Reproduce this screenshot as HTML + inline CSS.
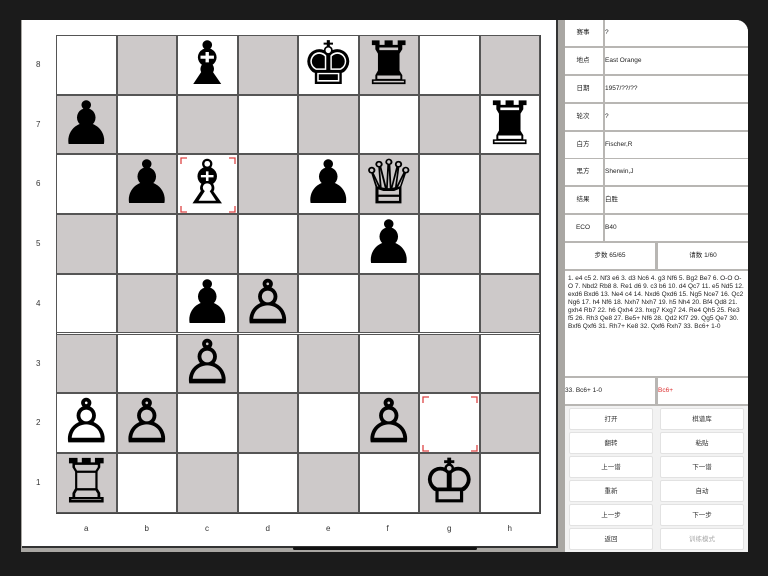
<!DOCTYPE html>
<html><head><meta charset="utf-8"><style>
*{margin:0;padding:0;box-sizing:border-box}
body{width:768px;height:576px;background:#1b1b1b;position:relative;overflow:hidden;font-family:"Liberation Sans","Noto Sans CJK SC",sans-serif}
#screen{position:absolute;left:21px;top:20px;width:727px;height:532px;background:#a9a7a3;border-top-right-radius:12px;overflow:hidden}
#boardbox{position:absolute;left:1px;top:0;width:536px;height:528px;background:#fff;border-right:2px solid #333;border-bottom:2px solid #333}
.sq{position:absolute;width:60.5px;height:59.7px;border:1px solid #555}
.d{background:#cdc9c9}
.pc{position:absolute;width:60.5px;height:59.7px;text-align:center;line-height:58px;font-family:"DejaVu Sans",sans-serif;font-size:60px;color:#000}
.w{-webkit-text-stroke:0.8px #000}
.lbl{position:absolute;font-size:8px;color:#333}
.hl{position:absolute;width:56px;height:56px}
#panel{position:absolute;left:544px;top:0;width:183px;height:532px;background:#b8b6b3}
.row{position:absolute;left:0;width:183px;height:26px;background:#fff;font-size:6.5px;color:#222}
.row .k{position:absolute;left:0;top:0;width:36px;height:26px;line-height:26px;text-align:center}
.row .v{position:absolute;left:38px;top:0;right:0;height:26px;line-height:26px;padding-left:0;background:#fff;border-left:2px solid #b8b6b3}
.btn{position:absolute;width:84px;height:22px;background:#fff;border:1px solid #e2e2e2;border-radius:2px;font-size:6.5px;text-align:center;line-height:22px;color:#333}
</style></head><body>
<div id="screen">
<div id="boardbox">
<div style="position:absolute;left:34px;top:15px;width:485px;height:479px;border:1px solid #444"></div>
</div>
<div id="sqs"></div>
<div id="panel">
<div class="row" style="top:0"><div class="k">赛事</div><div class="v">?</div></div>
<div class="row" style="top:28px"><div class="k">地点</div><div class="v">East Orange</div></div>
<div class="row" style="top:56px"><div class="k">日期</div><div class="v">1957/??/??</div></div>
<div class="row" style="top:84px"><div class="k">轮次</div><div class="v">?</div></div>
<div class="row" style="top:112px"><div class="k">白方</div><div class="v">Fischer,R</div></div>
<div class="row" style="top:139px"><div class="k">黑方</div><div class="v">Sherwin,J</div></div>
<div class="row" style="top:167px"><div class="k">结果</div><div class="v">白胜</div></div>
<div class="row" style="top:195px"><div class="k">ECO</div><div class="v">B40</div></div>
<div class="row" style="top:223px;width:90px;text-align:center;line-height:26px">步数 65/65</div>
<div class="row" style="top:223px;left:93px;width:90px;text-align:center;line-height:26px">请数 1/60</div>
<div style="position:absolute;left:0;top:251px;width:183px;height:105px;background:#fff;font-size:6.5px;line-height:8px;padding:4px 3px;color:#222">1. e4 c5 2. Nf3 e6 3. d3 Nc6 4. g3 Nf6 5. Bg2 Be7 6. O-O O-O 7. Nbd2 Rb8 8. Re1 d6 9. c3 b6 10. d4 Qc7 11. e5 Nd5 12. exd6 Bxd6 13. Ne4 c4 14. Nxd6 Qxd6 15. Ng5 Nce7 16. Qc2 Ng6 17. h4 Nf6 18. Nxh7 Nxh7 19. h5 Nh4 20. Bf4 Qd8 21. gxh4 Rb7 22. h6 Qxh4 23. hxg7 Kxg7 24. Re4 Qh5 25. Re3 f5 26. Rh3 Qe8 27. Be5+ Nf6 28. Qd2 Kf7 29. Qg5 Qe7 30. Bxf6 Qxf6 31. Rh7+ Ke8 32. Qxf6 Rxh7 33. Bc6+ 1-0</div>
<div class="row" style="top:358px;width:90px;line-height:26px">33. Bc6+ 1-0</div>
<div class="row" style="top:358px;left:93px;width:90px;line-height:26px;color:#d33">Bc6+</div>
<div style="position:absolute;left:0;top:386px;width:183px;height:146px;background:#f2f2f2"></div>
<div class="btn" style="left:4px;top:388px">打开</div><div class="btn" style="left:95px;top:388px">棋谱库</div>
<div class="btn" style="left:4px;top:412px">翻转</div><div class="btn" style="left:95px;top:412px">粘贴</div>
<div class="btn" style="left:4px;top:436px">上一谱</div><div class="btn" style="left:95px;top:436px">下一谱</div>
<div class="btn" style="left:4px;top:460px">重新</div><div class="btn" style="left:95px;top:460px">自动</div>
<div class="btn" style="left:4px;top:484px">上一步</div><div class="btn" style="left:95px;top:484px">下一步</div>
<div class="btn" style="left:4px;top:508px">返回</div><div class="btn" style="left:95px;top:508px;color:#aaa">训练模式</div>
</div>
<div style="position:absolute;left:272px;top:527px;width:184px;height:3px;background:#111;border-radius:2px"></div>
</div>
<script>
var s=document.getElementById('sqs'),h='';
var X=35,Y=15,W=60.5,H=59.7;
var board={
'2,0':'♝','4,0':'♚','5,0':'♜',
'0,1':'♟','7,1':'♜',
'1,2':'♟','2,2':'♗','4,2':'♟','5,2':'♕',
'5,3':'♟',
'2,4':'♟','3,4':'♙',
'2,5':'♙',
'0,6':'♙','1,6':'♙','5,6':'♙',
'0,7':'♖','6,7':'♔'};
for(var r=0;r<8;r++)for(var c=0;c<8;c++){
h+='<div class="sq'+((r+c)%2?' d':'')+'" style="left:'+(X+c*W)+'px;top:'+(Y+r*H)+'px"></div>';}
for(var k in board){var p=k.split(',');var c=+p[0],r=+p[1];var wp='♔♕♖♗♘♙'.indexOf(board[k])>=0;
h+='<div class="pc'+(wp?' w':'')+'" style="left:'+(X+c*W)+'px;top:'+(Y+r*H)+'px">'+board[k]+'</div>';}
function hl(c,r){var x=X+c*W+3,y=Y+r*H+3;
h+='<svg class="hl" style="left:'+x+'px;top:'+y+'px" viewBox="0 0 56 56"><path d="M1 7V1H7M49 1H55V7M55 49V55H49M7 55H1V49" fill="none" stroke="#d44" stroke-width="1.3"/></svg>';}
hl(2,2);hl(6,6);
for(var r=0;r<8;r++)h+='<div class="lbl" style="left:15px;top:'+(Y+r*H+25)+'px">'+(8-r)+'</div>';
var L='abcdefgh';for(var c=0;c<8;c++)h+='<div class="lbl" style="left:'+(X+c*W+28)+'px;top:504px">'+L[c]+'</div>';
s.innerHTML=h;
</script>
</body></html>
